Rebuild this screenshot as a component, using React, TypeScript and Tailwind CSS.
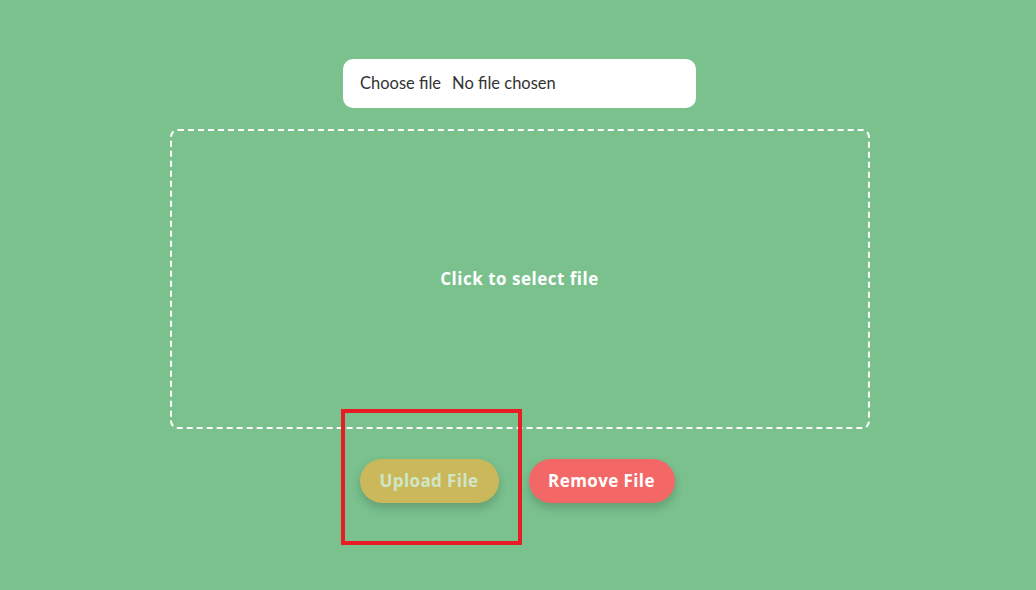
export default function App() {
  return (
    <div className="relative min-h-[590px] w-full bg-[#7ac18e] font-['Lato',sans-serif]">
      <div className="flex flex-col items-center pl-[3px] pt-[59px]">
        <div className="flex h-[49px] w-[353px] items-center rounded-[10px] bg-white pl-[17px] text-[16.5px] text-[#333]">
          <span>Choose file</span>
          <span className="ml-[11px]">No file chosen</span>
        </div>

        <div className="mt-[21px] flex h-[300px] w-[700px] items-center justify-center rounded-[8px] border-2 border-dashed border-white">
          <span className="font-['Open_Sans',sans-serif] text-[17px] font-bold tracking-[0.5px] text-white">
            Click to select file
          </span>
        </div>

        <div className="-ml-[5px] mt-[30px] flex gap-[30px] font-['Open_Sans',sans-serif]">
          <button className="h-[44px] w-[139px] rounded-full bg-[#cbb85a] text-[17px] font-bold tracking-[0.4px] text-[#cfe6c8] shadow-[0_5px_10px_rgba(0,0,0,0.18)]">
            Upload File
          </button>
          <button className="h-[44px] w-[146px] rounded-full bg-[#f46767] text-[17px] font-bold tracking-[0.4px] text-white shadow-[0_5px_10px_rgba(0,0,0,0.18)]">
            Remove File
          </button>
        </div>
      </div>

      <div className="pointer-events-none absolute left-[341px] top-[409px] h-[136px] w-[181px] border-4 border-[#e81c24]" />
    </div>
  );
}
